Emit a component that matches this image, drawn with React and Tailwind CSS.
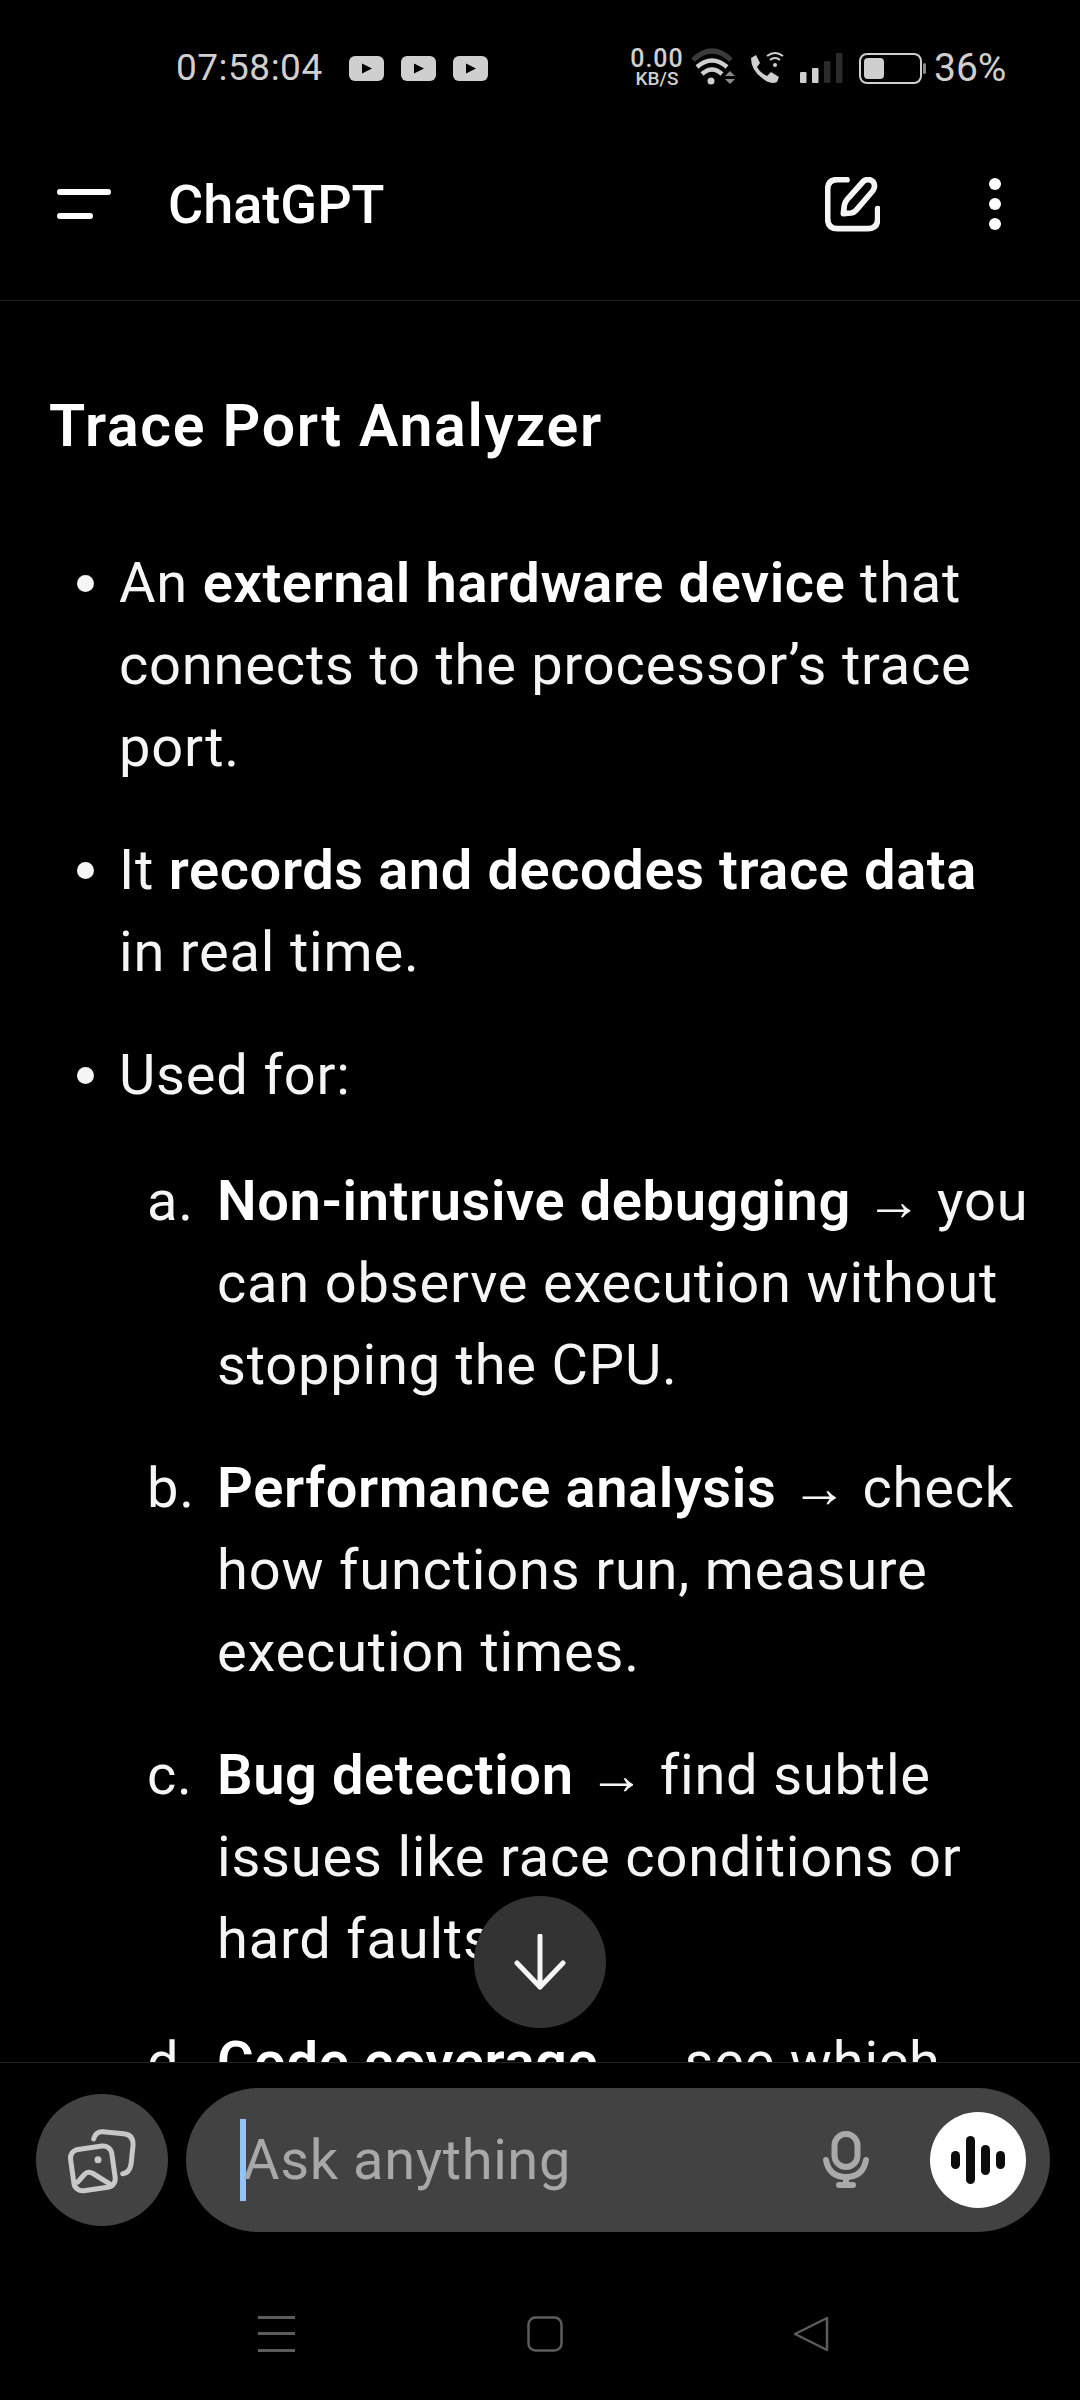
import React from 'react';

const font = { fontFamily: 'Roboto, sans-serif' };

function YoutubeBadge() {
  return (
    <svg width="35" height="25" viewBox="0 0 35 25">
      <rect width="35" height="25" rx="6" fill="#cfcfcf" />
      <path d="M13 7.5 L23 12.5 L13 17.5 Z" fill="#000" />
    </svg>
  );
}

function StatusIcons() {
  return (
    <svg width="236" height="40" viewBox="690 48 236 40" fill="none">
      {/* wifi */}
      <path d="M693 60 Q712 42 731 60" stroke="#3a3a3a" strokeWidth="5" />
      <path d="M697 67 Q712 54 727 67" stroke="#cfcfcf" strokeWidth="4.5" />
      <path d="M702 74 Q712 65 722 74" stroke="#cfcfcf" strokeWidth="4.5" />
      <circle cx="711" cy="81" r="3.5" fill="#cfcfcf" />
      <path d="M725 76 L730 71 L735 76 Z M725 79 L735 79 L730 84 Z" fill="#8a8a8a" />
      {/* phone */}
      <path d="M751 58 L756 55 L760 63 L757 67 Q760 73 767 76 L771 72 L779 77 L777 82 Q770 85 762 78 Q751 70 751 58 Z" fill="#cfcfcf" />
      <path d="M767 56 Q775 50 783 56 M770 60 Q775 56 780 60" stroke="#cfcfcf" strokeWidth="2" />
      <circle cx="775" cy="65" r="2" fill="#cfcfcf" />
      {/* signal */}
      <rect x="800" y="72" width="6.5" height="11" rx="1" fill="#cfcfcf" />
      <rect x="812" y="68" width="6.5" height="15" rx="1" fill="#cfcfcf" />
      <rect x="824" y="61" width="6.5" height="22" rx="1" fill="#2a2a2a" />
      <rect x="836" y="53" width="6.5" height="30" rx="1" fill="#2a2a2a" />
      {/* battery */}
      <rect x="860" y="54" width="61" height="29" rx="7" stroke="#cfcfcf" strokeWidth="2" />
      <rect x="864" y="58" width="20" height="21" rx="4" fill="#cfcfcf" />
      <rect x="923" y="63" width="3" height="11" rx="1.5" fill="#8a8a8a" />
    </svg>
  );
}

function EditIcon() {
  return (
    <svg width="55" height="55" viewBox="42 40 165 165" fill="none" stroke="#f5f5f5" strokeWidth="17" strokeLinecap="round" strokeLinejoin="round">
      <path d="M108 48 H78 Q50 48 50 78 V165 Q50 195 80 195 H170 Q200 195 200 165 V135" />
      <path d="M158 52 Q175 42 187 55 Q195 68 185 82 L135 140 Q130 146 120 148 L97 150 L100 125 Q102 115 108 108 Z" />
    </svg>
  );
}

function AttachIcon() {
  return (
    <svg width="70" height="67" viewBox="140 170 210 200" fill="none" stroke="#c8c8c8" strokeWidth="15" strokeLinecap="round" strokeLinejoin="round">
      <rect x="155" y="231" width="125" height="125" rx="26" transform="rotate(-8 218 293)" />
      <circle cx="233" cy="268" r="6" fill="#c8c8c8" strokeWidth="9" />
      <path d="M172 335 L192 312 Q203 300 218 309 L268 340" />
      <path d="M220 205 Q226 183 248 184 L310 190 Q340 193 338 225 L332 282 Q328 306 307 310" />
    </svg>
  );
}

function MicIcon() {
  return (
    <svg width="46" height="58" viewBox="0 0 46 58" fill="none" stroke="#a9a9a9" strokeLinecap="round">
      <rect x="11.5" y="3" width="23" height="33" rx="11.5" strokeWidth="6" />
      <path d="M3 29 Q6 46 23 46 Q40 46 43 29" strokeWidth="6" />
      <path d="M23 46 V54 M16 54 H30" strokeWidth="6" />
    </svg>
  );
}

function VoiceIcon() {
  return (
    <svg width="54" height="48" viewBox="0 0 54 48" fill="#0d0d0d">
      <rect x="0" y="15" width="9" height="18" rx="4.5" />
      <rect x="15" y="0" width="9" height="48" rx="4.5" />
      <rect x="30" y="9" width="9" height="30" rx="4.5" />
      <rect x="45" y="15" width="9" height="18" rx="4.5" />
    </svg>
  );
}

function NavBar() {
  return (
    <div className="flex h-[168px] items-start pt-[84px]">
      <svg width="37" height="36" viewBox="0 0 37 36" fill="#5c5c5c" className="ml-[258px]">
        <rect y="0" width="37" height="3" />
        <rect y="16" width="37" height="3" />
        <rect y="33" width="37" height="3" />
      </svg>
      <svg width="36" height="36" viewBox="0 0 36 36" fill="none" stroke="#5c5c5c" strokeWidth="2.5" className="ml-[232px]">
        <rect x="1.5" y="1.5" width="33" height="33" rx="7" />
      </svg>
      <svg width="36" height="36" viewBox="0 0 36 36" fill="none" stroke="#5c5c5c" strokeWidth="2.5" strokeLinejoin="round" className="ml-[230px]">
        <path d="M34 2 L2 18 L34 34 Z" />
      </svg>
    </div>
  );
}

function Arrow() {
  return <span className="font-normal leading-none">{' → '}</span>;
}

function Strong({ children }) {
  return <b className="font-semibold tracking-[0.6px] text-white">{children}</b>;
}

function Bullet({ children }) {
  return (
    <li className="flex">
      <span className="mt-[33px] ml-[77px] mr-[25px] h-[17px] w-[17px] shrink-0 rounded-full bg-[#f5f5f5]" />
      <div>{children}</div>
    </li>
  );
}

function Lettered({ label, children }) {
  return (
    <li className="flex">
      <span className="ml-[147px] w-[70px] shrink-0">{label}</span>
      <div>{children}</div>
    </li>
  );
}

export default function App() {
  return (
    <div className="relative flex h-[2400px] w-[1080px] flex-col overflow-hidden bg-black text-white" style={font}>
      {/* Status bar */}
      <div className="flex h-[136px] shrink-0 items-center pl-[176px] text-[#cfcfcf]">
        <span className="w-[173px] text-[37px] tracking-[0.5px]">07:58:04</span>
        <div className="flex gap-[17px]">
          <YoutubeBadge />
          <YoutubeBadge />
          <YoutubeBadge />
        </div>
        <div className="ml-[136px] flex w-[66px] flex-col items-center">
          <span className="text-[25px] leading-[21px] font-medium tracking-[1px]">0.00</span>
          <span className="text-[19px] leading-[19px] font-medium">KB/S</span>
        </div>
        <StatusIcons />
        <span className="ml-[8px] text-[39px]">36%</span>
      </div>

      {/* App header */}
      <header className="flex h-[165px] shrink-0 items-center border-b border-[#222] pb-[28px]">
        <svg width="54" height="30" viewBox="0 0 54 30" fill="#fff" className="ml-[57px]">
          <rect y="0" width="54" height="6" rx="3" />
          <rect y="24" width="36" height="6" rx="3" />
        </svg>
        <h1 className="ml-[57px] text-[54px] font-medium">ChatGPT</h1>
        <div className="ml-auto mr-[109px]">
          <EditIcon />
        </div>
        <div className="mr-[79px] flex flex-col gap-[8px]">
          <span className="h-[12px] w-[12px] rounded-full bg-white" />
          <span className="h-[12px] w-[12px] rounded-full bg-white" />
          <span className="h-[12px] w-[12px] rounded-full bg-white" />
        </div>
      </header>

      {/* Conversation */}
      <main className="min-h-0 flex-1 overflow-hidden pt-[90px] text-[56px] leading-[82px] tracking-[0.8px] text-[#f5f5f5]">
        <h2 className="ml-[49px] text-[59px] leading-[70px] font-semibold tracking-[1.7px] text-white">Trace Port Analyzer</h2>
        <ul className="mt-[81px] flex flex-col gap-[41px] pr-[60px]">
          <Bullet>An <Strong>external hardware device</Strong> that connects to the processor’s trace port.</Bullet>
          <Bullet>It <Strong>records and decodes trace data</Strong> in real time.</Bullet>
          <Bullet>Used for:</Bullet>
        </ul>
        <ol className="mt-[44px] flex flex-col gap-[41px] pr-[25px]">
          <Lettered label="a."><Strong>Non-intrusive debugging</Strong><Arrow />you can observe execution without stopping the CPU.</Lettered>
          <Lettered label="b."><Strong>Performance analysis</Strong><Arrow />check how functions run, measure execution times.</Lettered>
          <Lettered label="c."><Strong>Bug detection</Strong><Arrow />find subtle issues like race conditions or hard faults.</Lettered>
          <Lettered label="d."><Strong>Code coverage</Strong><Arrow />see which parts of the code ran.</Lettered>
        </ol>
      </main>

      {/* Composer */}
      <footer className="shrink-0 border-t border-[#222]">
        <div className="flex h-[169px] items-start gap-[18px] pt-[25px] pl-[36px] pr-[30px]">
          <button className="mt-[6px] flex h-[132px] w-[132px] shrink-0 items-center justify-center rounded-full bg-[#424242]">
            <AttachIcon />
          </button>
          <div className="flex h-[144px] flex-1 items-center rounded-full bg-[#424242] pl-[54px] pr-[24px]">
            <span className="h-[82px] w-[6px] bg-[#8fc5fb]" />
            <span className="-ml-[3px] text-[56px] tracking-[0.6px] text-[#a8a8a8]">Ask anything</span>
            <div className="ml-auto mr-[61px]">
              <MicIcon />
            </div>
            <button className="flex h-[96px] w-[96px] items-center justify-center rounded-full bg-white">
              <VoiceIcon />
            </button>
          </div>
        </div>
        <NavBar />
      </footer>

      {/* Scroll to bottom, floats over the conversation */}
      <button className="absolute left-[474px] top-[1896px] flex h-[132px] w-[132px] items-center justify-center rounded-full bg-[#333]">
        <svg width="52" height="56" viewBox="0 0 52 56" fill="none" stroke="#f5f5f5" strokeWidth="5" strokeLinecap="round" strokeLinejoin="round">
          <path d="M26 2 V53 M3 29 L26 53 L49 29" />
        </svg>
      </button>
    </div>
  );
}
